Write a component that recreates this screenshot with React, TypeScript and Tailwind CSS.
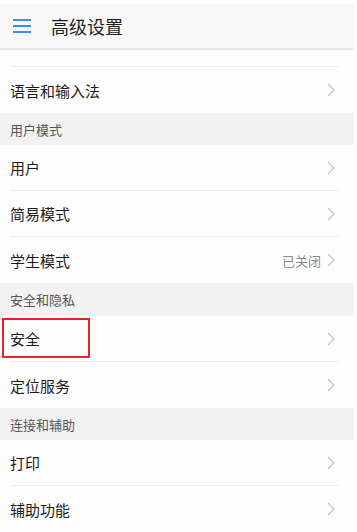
import React from "react";

const font = { fontFamily: '"Noto Sans CJK SC", "Noto Sans", sans-serif' };

function Chevron() {
  return (
    <svg width="8" height="14" viewBox="0 0 8 14" className="shrink-0">
      <polyline points="1,1 7,7 1,13" fill="none" stroke="#c4c4c4" strokeWidth="1.3" />
    </svg>
  );
}

function Row({ label, value, divider = true, boxed = false }: { label: string; value?: string; divider?: boolean; boxed?: boolean }) {
  return (
    <div className="relative h-[46px] bg-[#fdfdfd] flex flex-col">
      <div className="flex-1 flex items-center pl-[10px] pr-[19px]">
        <span className="text-[15px] text-[#1c1c1c] flex-1 leading-none">{label}</span>
        {value && <span className="text-[13px] text-[#8a8a8a] mr-[6px] leading-none">{value}</span>}
        <Chevron />
      </div>
      {divider && <div className="ml-[10px] mr-[16px] h-px bg-[#ececec]" />}
      {boxed && <div className="absolute left-[2px] top-[2px] w-[88px] h-[40px] border-2 border-[#e8232c]" />}
    </div>
  );
}

function Section({ title, tall = false }: { title: string; tall?: boolean }) {
  return (
    <div className={`${tall ? "h-[33px]" : "h-[32px]"} bg-[#f2f2f2] flex items-center pl-[10px]`}>
      <span className="text-[13px] text-[#555555] leading-none">{title}</span>
    </div>
  );
}

export default function App() {
  return (
    <div className="w-[357px] h-[532px] bg-white overflow-hidden" style={font}>
      <div className="w-[354px]">
        <div className="h-[4px] bg-white" />
        <div className="h-[44px] bg-[#f8f8f8] flex items-center">
          <svg width="18" height="14" viewBox="0 0 18 14" className="ml-[13px]">
            <rect x="0" y="0" width="18" height="2" fill="#3a8ef2" />
            <rect x="0" y="6" width="18" height="2" fill="#3a8ef2" />
            <rect x="0" y="12" width="18" height="2" fill="#3a8ef2" />
          </svg>
          <span className="ml-[20px] text-[18px] text-[#1e1e1e] leading-none">高级设置</span>
        </div>
        <div className="h-[2px] bg-[#e6e6e6]" />
        <div className="h-[17px] bg-[#fdfdfd] flex flex-col justify-end">
          <div className="ml-[10px] mr-[16px] h-px bg-[#ececec]" />
        </div>
        <Row label="语言和输入法" divider={false} />
        <Section title="用户模式" />
        <Row label="用户" />
        <Row label="简易模式" />
        <Row label="学生模式" value="已关闭" divider={false} />
        <Section title="安全和隐私" tall />
        <Row label="安全" boxed />
        <Row label="定位服务" divider={false} />
        <Section title="连接和辅助" />
        <Row label="打印" />
        <Row label="辅助功能" divider={false} />
      </div>
    </div>
  );
}
